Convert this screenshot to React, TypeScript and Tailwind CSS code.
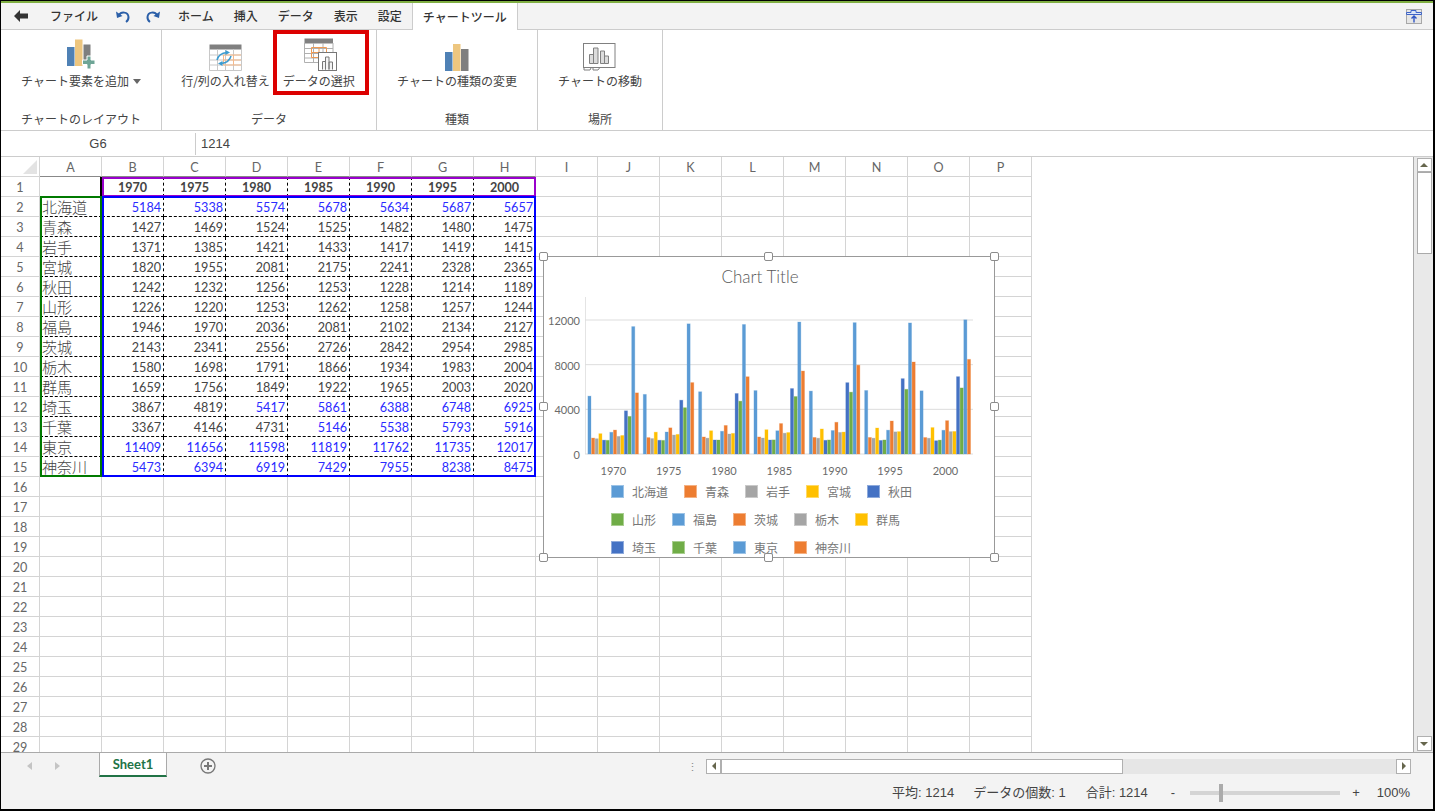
const CJK = "font-['Noto_Sans_CJK_JP',sans-serif]";

const YEARS = [1970, 1975, 1980, 1985, 1990, 1995, 2000];
const COLUMNS = ["A", "B", "C", "D", "E", "F", "G", "H", "I", "J", "K", "L", "M", "N", "O", "P"];

const PREFS: { name: string; color: string; values: number[] }[] = [
  { name: "北海道", color: "#5b9bd5", values: [5184, 5338, 5574, 5678, 5634, 5687, 5657] },
  { name: "青森", color: "#ed7d31", values: [1427, 1469, 1524, 1525, 1482, 1480, 1475] },
  { name: "岩手", color: "#a5a5a5", values: [1371, 1385, 1421, 1433, 1417, 1419, 1415] },
  { name: "宮城", color: "#ffc000", values: [1820, 1955, 2081, 2175, 2241, 2328, 2365] },
  { name: "秋田", color: "#4472c4", values: [1242, 1232, 1256, 1253, 1228, 1214, 1189] },
  { name: "山形", color: "#70ad47", values: [1226, 1220, 1253, 1262, 1258, 1257, 1244] },
  { name: "福島", color: "#5b9bd5", values: [1946, 1970, 2036, 2081, 2102, 2134, 2127] },
  { name: "茨城", color: "#ed7d31", values: [2143, 2341, 2556, 2726, 2842, 2954, 2985] },
  { name: "栃木", color: "#a5a5a5", values: [1580, 1698, 1791, 1866, 1934, 1983, 2004] },
  { name: "群馬", color: "#ffc000", values: [1659, 1756, 1849, 1922, 1965, 2003, 2020] },
  { name: "埼玉", color: "#4472c4", values: [3867, 4819, 5417, 5861, 6388, 6748, 6925] },
  { name: "千葉", color: "#70ad47", values: [3367, 4146, 4731, 5146, 5538, 5793, 5916] },
  { name: "東京", color: "#5b9bd5", values: [11409, 11656, 11598, 11819, 11762, 11735, 12017] },
  { name: "神奈川", color: "#ed7d31", values: [5473, 6394, 6919, 7429, 7955, 8238, 8475] },
];

const LEGEND_ROWS = [PREFS.slice(0, 5), PREFS.slice(5, 10), PREFS.slice(10, 14)];

function BackIcon() {
  return (
    <svg width="14" height="12" viewBox="0 0 14 12">
      <path d="M0 6 L6 0 L6 3.5 L14 3.5 L14 8.5 L6 8.5 L6 12 Z" fill="#333" />
    </svg>
  );
}

function UndoIcon({ flip }: { flip?: boolean }) {
  return (
    <svg width="14" height="13" viewBox="0 0 14 13" className={flip ? "-scale-x-100" : ""}>
      <path d="M3 5 C5 1.5 12 1.5 12.5 7 C12.6 9 11.5 11 10 12" fill="none" stroke="#2b5fa8" strokeWidth="2" />
      <path d="M0 1.5 L1 8 L6.5 6 Z" fill="#2b5fa8" />
    </svg>
  );
}

function AddElementIcon() {
  return (
    <svg width="28" height="32" viewBox="0 0 28 32">
      <rect x="0" y="8" width="7.5" height="19" fill="#4f81b5" />
      <rect x="8" y="0.5" width="7.5" height="26.5" fill="#edc67f" />
      <rect x="16.5" y="5.5" width="7" height="20" fill="#7f7f7f" />
      <path d="M20 17 H24 V21 H28 V25.5 H24 V30 H20 V25.5 H15.5 V21 H20 Z" fill="#6ea596" stroke="#fff" strokeWidth="1" />
    </svg>
  );
}

function SwitchIcon() {
  return (
    <svg width="33" height="27" viewBox="0 0 33 27">
      <rect x="0.5" y="0.5" width="32" height="5" fill="#808080" />
      <path d="M0.5 5 V26.5 H32.5 V5 M8.5 5 V26.5 M16.5 5 V26.5 M24.5 5 V26.5 M0.5 11 H32.5 M0.5 16 H32.5 M0.5 21 H32.5" fill="none" stroke="#c8c8c8" />
      <path d="M14.5 11 H32 M14.5 16 H32 M14.5 21 H32 M14.5 11 V21 M24.5 11 V21" fill="none" stroke="#f5b98a" />
      <path d="M8 16 C9 12 13 9 18 8.5" fill="none" stroke="#3b9bd0" strokeWidth="1.5" />
      <path d="M16.5 6 L21 8.5 L16.5 11 Z" fill="#3b9bd0" />
      <path d="M22 12 C21 16 17 19 12 19.5" fill="none" stroke="#3b9bd0" strokeWidth="1.5" />
      <path d="M13.5 17 L9 19.5 L13.5 22 Z" fill="#3b9bd0" />
    </svg>
  );
}

function SelectDataIcon() {
  return (
    <svg width="33" height="33" viewBox="0 0 33 33">
      <rect x="0.5" y="0.5" width="28.5" height="5" fill="#808080" />
      <path d="M0.5 5 V24.5 H15 M29 5 V14 M9.5 5 V24.5 M19 5 V14 M0.5 10.5 H29 M0.5 15.5 H15 M0.5 20 H15" fill="none" stroke="#b0b0b0" />
      <path d="M7.5 9.5 H22.5 V14.5 H7.5 Z M7.5 14.5 V19.5 H15 M15 9.5 V14.5" fill="none" stroke="#ed9a55" />
      <rect x="14.5" y="14.5" width="18" height="18" fill="#fff" stroke="#777" />
      <path d="M18.5 31.5 V23.5 H21.5 V31.5 M21.5 31.5 V19 H25 V31.5 M25 31.5 V24 H28.5 V31.5" fill="#f3f3f3" stroke="#777" />
    </svg>
  );
}

function ChangeTypeIcon() {
  return (
    <svg width="24" height="27" viewBox="0 0 24 27">
      <rect x="0" y="8" width="7.5" height="19" fill="#4f81b5" />
      <rect x="8" y="0" width="7.5" height="27" fill="#edc67f" />
      <rect x="16" y="5" width="7.5" height="22" fill="#7f7f7f" />
    </svg>
  );
}

function MoveIcon() {
  return (
    <svg width="33" height="28" viewBox="0 0 33 28">
      <rect x="0.5" y="0.5" width="31.5" height="24" fill="#fff" stroke="#808080" />
      <path d="M6.5 20.5 V11.5 H10.5 V20.5 Z M10.5 20.5 V5 H15 V20.5 Z M17.5 20.5 V8 H21.5 V20.5 Z M21.5 20.5 V13 H25.5 V20.5 Z" fill="#dcdcdc" stroke="#808080" />
      <path d="M1 25 V27 H7 L8 25 M10 25 V27 H15 L16.5 25" fill="none" stroke="#808080" />
    </svg>
  );
}

function PinIcon() {
  return (
    <svg width="16" height="15" viewBox="0 0 16 15">
      <rect x="0.5" y="0.5" width="15" height="14" fill="#e6e6e6" stroke="#a8a8a8" />
      <path d="M0.5 3.5 H5 V1.5 H10 V3.5 H15.5 V5.5 H0.5 Z" fill="#dce6f7" stroke="#3f64c8" />
      <path d="M8 13.5 V7 M5.5 9.5 L8 7 L10.5 9.5" fill="none" stroke="#2f55c4" strokeWidth="1.4" />
    </svg>
  );
}

function MenuBar() {
  return (
    <div className={`flex h-[27px] shrink-0 items-center border-b border-[#cccccc] bg-[#f3f3f3] text-[12px] font-medium text-[#333333] ${CJK}`}>
      <span className="ml-[13px]"><BackIcon /></span>
      <span className="ml-[22px]">ファイル</span>
      <span className="ml-[18px]"><UndoIcon /></span>
      <span className="ml-[16px]"><UndoIcon flip /></span>
      <span className="ml-[18px]">ホーム</span>
      <span className="ml-[20px]">挿入</span>
      <span className="ml-[20px]">データ</span>
      <span className="ml-[20px]">表示</span>
      <span className="ml-[20px]">設定</span>
      <span className="z-10 -mb-px ml-[10px] flex h-[27px] w-[106px] items-center justify-center border-x border-[#cccccc] bg-white">チャートツール</span>
      <span className="ml-auto mr-[11px]"><PinIcon /></span>
    </div>
  );
}

function RibbonButton({ icon, label, caret }: { icon: React.ReactNode; label: string; caret?: boolean }) {
  return (
    <div className="flex flex-col items-center">
      <div className="flex h-[41px] items-end">{icon}</div>
      <div className="flex h-[20px] items-center whitespace-nowrap">
        {label}
        {caret && <span className="ml-[4px] h-0 w-0 border-x-[4px] border-t-[5px] border-x-transparent border-t-[#666666]" />}
      </div>
    </div>
  );
}

function RibbonGroup({ width, label, children }: { width: string; label: string; children: React.ReactNode }) {
  return (
    <div className={`flex h-full flex-col border-r border-[#cccccc] ${width}`}>
      <div className="flex h-[78px] justify-center">{children}</div>
      <div className="flex h-[22px] items-center justify-center">{label}</div>
    </div>
  );
}

function Ribbon() {
  return (
    <div className={`flex h-[101px] shrink-0 border-b border-[#cccccc] bg-white text-[12px] text-[#444444] ${CJK}`}>
      <RibbonGroup width="w-[161px]" label="チャートのレイアウト">
        <RibbonButton icon={<AddElementIcon />} label="チャート要素を追加" caret />
      </RibbonGroup>
      <RibbonGroup width="w-[215px]" label="データ">
        <div className="ml-[12px] flex gap-[3px]">
          <RibbonButton icon={<SwitchIcon />} label="行/列の入れ替え" />
          <div className="flex h-[65px] w-[96px] flex-col items-center border-4 border-[#dc0000]">
            <div className="flex h-[37px] items-end"><SelectDataIcon /></div>
            <div className="flex h-[20px] items-center whitespace-nowrap pr-[4px]">データの選択</div>
          </div>
        </div>
      </RibbonGroup>
      <RibbonGroup width="w-[161px]" label="種類">
        <RibbonButton icon={<ChangeTypeIcon />} label="チャートの種類の変更" />
      </RibbonGroup>
      <RibbonGroup width="w-[125px]" label="場所">
        <RibbonButton icon={<MoveIcon />} label="チャートの移動" />
      </RibbonGroup>
    </div>
  );
}

function FormulaBar() {
  return (
    <div className="flex h-[26px] shrink-0 items-center border-b border-[#cccccc] bg-white font-['Liberation_Sans',sans-serif] text-[13px] text-[#444444]">
      <div className="w-[194px] text-center">G6</div>
      <div className="h-[22px] w-px bg-[#cccccc]" />
      <div className="pl-[5px]">1214</div>
    </div>
  );
}

function Sheet() {
  const gridLine = "border-r border-b border-[#d4d4d4]";
  const dashed = "border-r border-b border-dashed border-black";
  const rows = Array.from({ length: 29 }, (_, i) => i + 1);
  return (
    <div className="grid grid-cols-[39px_repeat(16,62px)] auto-rows-[20px] font-['Lato',sans-serif] text-[12.6px] text-[#444444]">
      <div className={`relative bg-white ${gridLine}`}>
        <div className="absolute bottom-[2px] right-[2px] h-0 w-0 border-b-[14px] border-l-[14px] border-b-[#e3e3e3] border-l-transparent" />
      </div>
      {COLUMNS.map((c, i) => (
        <div key={c} className={`flex items-center justify-center pt-[3px] text-[#666666] ${gridLine} ${i < 8 ? "border-b-[#888888]" : ""}`}>
          {c}
        </div>
      ))}
      {rows.map((r) => (
        <div key={r} className="contents">
          <div className={`flex items-center justify-center pt-[3px] text-[#666666] ${gridLine}`}>{r}</div>
          {COLUMNS.map((c, i) => {
            if (r === 1 && i === 0) return <div key={c} className={gridLine} />;
            if (r === 1 && i < 8) {
              return (
                <div key={c} className={`flex items-center justify-center pt-[4px] font-bold ${dashed}`}>
                  {YEARS[i - 1]}
                </div>
              );
            }
            if (r >= 2 && r <= 15 && i === 0) {
              return (
                <div key={c} className={`whitespace-nowrap pl-[2px] text-[15px] font-light leading-[20px] ${CJK} ${dashed}`}>
                  {PREFS[r - 2].name}
                </div>
              );
            }
            if (r >= 2 && r <= 15 && i < 8) {
              const value = PREFS[r - 2].values[i - 1];
              return (
                <div key={c} className={`flex items-center justify-end pr-[2px] pt-[4px] ${value >= 5000 ? "text-[#2a2aff]" : ""} ${dashed}`}>
                  {value}
                </div>
              );
            }
            return <div key={c} className={gridLine} />;
          })}
        </div>
      ))}
    </div>
  );
}

function BarChart() {
  const y = (v: number) => 454 - (v * 134) / 12000;
  return (
    <svg width="450" height="184" viewBox="544 295 450 184" className="block">
      <line x1="585.5" y1="297" x2="585.5" y2="454" stroke="#e4e4e4" />
      {[0, 4000, 8000, 12000].map((v) => (
        <g key={v}>
          <line x1="585" x2="973" y1={y(v)} y2={y(v)} stroke="#dddddd" />
          <text x="580" y={y(v) + 5} textAnchor="end" fontSize="11" fill="#6a6a6a" fontFamily="Lato, sans-serif">{v}</text>
        </g>
      ))}
      {YEARS.map((year, i) => (
        <g key={year}>
          {PREFS.map((p, s) => (
            <rect
              key={p.name}
              x={587.9 + 55.35 * i + 3.65 * s}
              y={y(p.values[i])}
              width="3.1"
              height={454 - y(p.values[i])}
              fill={p.color}
              stroke={p.color}
              strokeOpacity="0.3"
              strokeWidth="0.9"
            />
          ))}
          <text x={613.3 + 55.35 * i} y="474.5" textAnchor="middle" fontSize="11" fill="#6a6a6a" fontFamily="Lato, sans-serif">{year}</text>
        </g>
      ))}
    </svg>
  );
}

function Handle({ className }: { className: string }) {
  return <div className={`absolute h-[9px] w-[9px] rounded-[2px] border border-[#8c8c8c] bg-white ${className}`} />;
}

function ChartObject() {
  return (
    <div className="absolute left-[542px] top-[99px] h-[302px] w-[452px] border border-[#999999] bg-white">
      <div className="h-full overflow-hidden">
        <div className="flex h-[38px] items-center justify-center pr-[18px] pt-[2px] font-['Lato',sans-serif] text-[17px] font-light text-[#595959]">Chart Title</div>
        <BarChart />
        <div className={`flex flex-col gap-[15px] pl-[67px] pt-[6px] text-[12px] text-[#777777] ${CJK}`}>
          {LEGEND_ROWS.map((row) => (
            <div key={row[0].name} className="flex h-[13px] items-center gap-[16px]">
              {row.map((p) => (
                <div key={p.name} className="flex items-center gap-[8px]">
                  <span className="h-[13px] w-[13px] border border-white/40" style={{ backgroundColor: p.color }} />
                  <span className="leading-[13px]">{p.name}</span>
                </div>
              ))}
            </div>
          ))}
        </div>
      </div>
      <Handle className="-left-[5px] -top-[5px]" />
      <Handle className="left-[220px] -top-[5px]" />
      <Handle className="-right-[5px] -top-[5px]" />
      <Handle className="-left-[5px] top-[145px]" />
      <Handle className="-right-[5px] top-[145px]" />
      <Handle className="-bottom-[5px] -left-[5px]" />
      <Handle className="-bottom-[5px] left-[220px]" />
      <Handle className="-bottom-[5px] -right-[5px]" />
    </div>
  );
}

function Highlights() {
  return (
    <>
      <div className="absolute left-[99px] top-[20px] h-[20px] w-[2px] bg-black" />
      <div className="absolute left-[101px] top-[20px] h-[20px] w-[434px] border-2 border-[#9900cc]" />
      <div className="absolute left-[101px] top-[39px] h-[281px] w-[434px] border-2 border-[#0000ff]" />
      <div className="absolute left-[39px] top-[39px] h-[281px] w-[62px] border-2 border-[#007a00]" />
    </>
  );
}

function ScrollButton({ dir, className }: { dir: "up" | "down" | "left" | "right"; className?: string }) {
  const arrows = {
    up: "border-x-[4px] border-b-[4px] border-x-transparent border-b-[#66664d]",
    down: "border-x-[4px] border-t-[4px] border-x-transparent border-t-[#66664d]",
    left: "border-y-[4px] border-r-[4px] border-y-transparent border-r-[#66664d]",
    right: "border-y-[4px] border-l-[4px] border-y-transparent border-l-[#66664d]",
  };
  return (
    <div className={`flex shrink-0 items-center justify-center border border-[#b0b0b0] bg-white ${className ?? ""}`}>
      <span className={`h-0 w-0 ${arrows[dir]}`} />
    </div>
  );
}

function VerticalScrollbar() {
  return (
    <div className="flex w-[20px] shrink-0 flex-col items-center border-l border-[#aaaaaa] bg-[#e9e9e9] pt-[1px] pl-[3px] pr-[2px]">
      <ScrollButton dir="up" className="h-[14px] w-[15px]" />
      <div className="h-[82px] w-[15px] border border-[#aaaaaa] bg-white" />
      <div className="flex-1" />
      <ScrollButton dir="down" className="mb-[1px] h-[15px] w-[15px]" />
    </div>
  );
}

function SheetBar() {
  return (
    <div className="flex h-[24px] shrink-0 bg-[#f3f3f3]">
      <div className="flex w-[98px] items-center pl-[26px] pt-[2px]">
        <span className="h-0 w-0 border-y-[4px] border-r-[5px] border-y-transparent border-r-[#c4c4c4]" />
        <span className="ml-[23px] h-0 w-0 border-y-[4px] border-l-[5px] border-y-transparent border-l-[#c4c4c4]" />
      </div>
      <div className="flex w-[68px] items-center justify-center border-x border-b-2 border-x-[#aaaaaa] border-b-[#217346] bg-white pt-[1px] font-['Lato',sans-serif] text-[13px] font-bold text-[#217346]">
        Sheet1
      </div>
      <div className="ml-[33px] flex items-center pt-[2px]">
        <svg width="16" height="16" viewBox="0 0 16 16">
          <circle cx="8" cy="8" r="7" fill="none" stroke="#777777" strokeWidth="1.3" />
          <path d="M8 4 V12 M4 8 H12" stroke="#777777" strokeWidth="2" />
        </svg>
      </div>
      <div className="ml-auto flex items-center pt-[2px]">
        <span className="mr-[8px] text-[11px] leading-none text-[#888888]">⋮</span>
        <div className="flex h-[15px] w-[705px] bg-[#e6e6e6]">
          <ScrollButton dir="left" className="w-[15px]" />
          <div className="w-[402px] border border-[#b0b0b0] bg-white" />
          <div className="flex-1" />
          <ScrollButton dir="right" className="w-[15px]" />
        </div>
        <div className="w-[22px]" />
      </div>
    </div>
  );
}

function StatusBar() {
  return (
    <div className="flex flex-1 items-center justify-end bg-[#f3f3f3] pb-[1px] pr-[23px] font-['Liberation_Sans','Noto_Sans_CJK_JP',sans-serif] text-[13px] text-[#444444]">
      <span>平均: 1214</span>
      <span className="ml-[19px]">データの個数: 1</span>
      <span className="ml-[20px]">合計: 1214</span>
      <span className="ml-[23px]">-</span>
      <div className="relative ml-[15px] h-[4px] w-[150px] bg-[#d4d4d4]">
        <div className="absolute left-[29px] top-[-7px] h-[18px] w-[4px] bg-[#ababab]" />
      </div>
      <span className="ml-[12px]">+</span>
      <span className="ml-[17px]">100%</span>
    </div>
  );
}

export default function App() {
  return (
    <div className="flex h-[811px] w-[1435px] flex-col overflow-hidden border-y border-b-2 border-l border-r-2 border-black bg-white">
      <div className="h-[2px] shrink-0 bg-[#7fae42]" />
      <MenuBar />
      <Ribbon />
      <FormulaBar />
      <div className="flex h-[596px] shrink-0 border-b border-[#aaaaaa]">
        <div className="relative flex-1 overflow-hidden">
          <Sheet />
          <Highlights />
          <ChartObject />
        </div>
        <VerticalScrollbar />
      </div>
      <SheetBar />
      <StatusBar />
    </div>
  );
}
